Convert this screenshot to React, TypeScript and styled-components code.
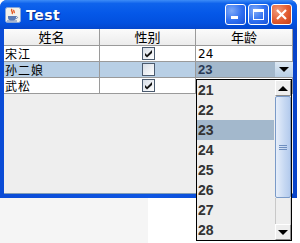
import styled, { createGlobalStyle } from "styled-components"

const GlobalStyle = createGlobalStyle`
    html, body {
        margin: 0;
        padding: 0;
        background: #ffffff;
    }
    * {
        box-sizing: border-box;
    }
`

interface Person {
    name: string
    male: boolean
    age: number
}

const people: Person[] = [
    { name: '宋江', male: true, age: 24 },
    { name: '孙二娘', male: false, age: 23 },
    { name: '武松', male: true, age: 0 },
]

const ages = [21, 22, 23, 24, 25, 26, 27, 28]

function JavaIcon() {
    return (
        <svg width="16" height="16" viewBox="0 0 16 16">
            <rect x="0.5" y="0.5" width="15" height="15" rx="2" fill="#f4f2ea" stroke="#8aa6d6" />
            <path d="M7 2 C5 4 9 5 7 7 M9 3 C8 4 10 5 9 6" stroke="#e2541c" strokeWidth="1.4" fill="none" />
            <path d="M3 9 H11 V11 C11 13 9 13.5 7 13.5 C5 13.5 3 13 3 11 Z" fill="#5a7bb5" />
            <path d="M11 9.5 C13 9.5 13 11.5 11 11.5" stroke="#5a7bb5" strokeWidth="1" fill="none" />
            <path d="M2 14 H12" stroke="#5a7bb5" strokeWidth="1" />
        </svg>
    )
}

function CheckBox({ checked }: { checked: boolean }) {
    return (
        <Box>
            {checked && (
                <svg width="9" height="9" viewBox="0 0 9 9">
                    <path d="M1 4 L3 6 L8 1 L8 4 L3 8.5 L1 6.5 Z" fill="#141414" />
                </svg>
            )}
        </Box>
    )
}

function App() {
    return (
        <Page>
            <GlobalStyle />
            <Window>
                <TitleBar>
                    <JavaIcon />
                    <Title>Test</Title>
                    <Buttons>
                        <CapButton>
                            <MinGlyph />
                        </CapButton>
                        <CapButton>
                            <MaxGlyph />
                        </CapButton>
                        <CapButton $close>
                            <svg width="13" height="13" viewBox="0 0 13 13">
                                <path d="M2 2 L11 11 M11 2 L2 11" stroke="#fff" strokeWidth="2.2" />
                            </svg>
                        </CapButton>
                    </Buttons>
                </TitleBar>
                <Client>
                    <Table>
                        <HeaderRow>
                            <HeadCell>姓名</HeadCell>
                            <HeadCell>性别</HeadCell>
                            <HeadCell>年龄</HeadCell>
                        </HeaderRow>
                        {people.map((p, i) => (
                            <Row key={p.name} $selected={i === 1}>
                                <Cell>{p.name}</Cell>
                                <Cell $center>
                                    <CheckBox checked={p.male} />
                                </Cell>
                                {i === 1 ? (
                                    <ComboCell>
                                        <ComboText>{p.age}</ComboText>
                                        <ComboArrow>
                                            <ArrowDown />
                                        </ComboArrow>
                                    </ComboCell>
                                ) : (
                                    <Cell $number>{p.age ? p.age : ''}</Cell>
                                )}
                            </Row>
                        ))}
                    </Table>
                </Client>
                <Popup>
                    <List>
                        {ages.map((a) => (
                            <Item key={a} $selected={a === 23}>{a}</Item>
                        ))}
                    </List>
                    <ScrollBar>
                        <ScrollButton>
                            <ArrowUp />
                        </ScrollButton>
                        <Thumb>
                            <Grip />
                        </Thumb>
                        <Track />
                        <ScrollButton>
                            <ArrowDown />
                        </ScrollButton>
                    </ScrollBar>
                </Popup>
            </Window>
            <Ground />
        </Page>
    )
}

export default App

const Page = styled.div`
    width: 300px;
    height: 243px;
    overflow: hidden;
    background: #ffffff;
`
const Window = styled.div`
    position: relative;
    width: 297px;
    height: 198px;
    display: flex;
    flex-direction: column;
    border-radius: 7px 7px 0 0;
    background: linear-gradient(90deg, #0a4bd6, #0d55e2 50%, #0843c8);
`
const TitleBar = styled.div`
    height: 29px;
    display: flex;
    align-items: center;
    padding: 0 5px 0 5px;
    border-radius: 7px 7px 0 0;
    background: linear-gradient(#3d8cf7 0%, #0f63ec 12%, #0558e8 45%, #0250df 80%, #0446cc 100%);
`
const Title = styled.div`
    margin-left: 5px;
    color: #ffffff;
    font-family: "DejaVu Sans", sans-serif;
    font-weight: bold;
    font-size: 14px;
    letter-spacing: 0.5px;
    text-shadow: 1px 1px 0 #0a2a8a;
`
const Buttons = styled.div`
    margin-left: auto;
    display: flex;
    gap: 2px;
`
const CapButton = styled.div<{ $close?: boolean }>`
    width: 21px;
    height: 21px;
    border: 1px solid #ffffff;
    border-radius: 3px;
    display: flex;
    align-items: center;
    justify-content: center;
    position: relative;
    background: ${({ $close }) => $close
        ? 'radial-gradient(circle at 30% 30%, #f19a7a, #e25b30 55%, #c4401a)'
        : 'radial-gradient(circle at 30% 30%, #7eaaf8, #2f6ff0 55%, #1a52d8)'};
`
const MinGlyph = styled.div`
    position: absolute;
    left: 5px;
    bottom: 5px;
    width: 7px;
    height: 3px;
    background: #ffffff;
`
const MaxGlyph = styled.div`
    width: 11px;
    height: 11px;
    border: 1px solid #ffffff;
    border-top-width: 3px;
`
const Client = styled.div`
    flex: 1;
    margin: 0 4px 4px 4px;
    background: #eeeeee;
    border-bottom: 1px solid #7f9db9;
`
const Table = styled.div`
    display: flex;
    flex-direction: column;
    font-family: "Noto Sans CJK SC", "DejaVu Sans", sans-serif;
    font-size: 12px;
    line-height: 12px;
    color: #000000;
`
const HeaderRow = styled.div`
    display: grid;
    grid-template-columns: 96px 96px 97px;
    height: 17px;
    background: linear-gradient(#fbfbfb, #ececec);
    border-bottom: 1px solid #9a9a9a;
`
const HeadCell = styled.div`
    display: flex;
    align-items: center;
    justify-content: center;
    border-right: 1px solid #9a9a9a;
    font-size: 13px;
`
const Row = styled.div<{ $selected?: boolean }>`
    display: grid;
    grid-template-columns: 96px 96px 97px;
    height: 16px;
    background: ${({ $selected }) => $selected ? '#b8cfe5' : '#ffffff'};
    border-bottom: 1px solid #9a9a9a;
`
const Cell = styled.div<{ $center?: boolean; $number?: boolean }>`
    display: flex;
    align-items: center;
    justify-content: ${({ $center }) => $center ? 'center' : 'flex-start'};
    padding-left: ${({ $number }) => $number ? '2px' : '1px'};
    border-right: 1px solid #9a9a9a;
    font-family: ${({ $number }) => $number ? '"DejaVu Sans", sans-serif' : 'inherit'};
    font-size: 12px;
    letter-spacing: ${({ $number }) => $number ? '0' : '1px'};
`
const Box = styled.div`
    width: 13px;
    height: 13px;
    border: 1px solid #4a5a6e;
    background: linear-gradient(135deg, #d6dde6, #ffffff);
    display: flex;
    align-items: center;
    justify-content: center;
`
const ComboCell = styled.div`
    display: flex;
    align-items: stretch;
    background: #a3b8cc;
`
const ComboText = styled.div`
    flex: 1;
    padding-left: 2px;
    display: flex;
    align-items: center;
    font-family: "Liberation Sans", sans-serif;
    font-weight: bold;
    font-size: 13px;
    color: #2a3a55;
`
const ComboArrow = styled.div`
    width: 18px;
    display: flex;
    align-items: center;
    justify-content: center;
    background: linear-gradient(#dde8f3, #b8cfe5);
`
const ArrowDown = styled.div`
    width: 0;
    height: 0;
    border-left: 5px solid transparent;
    border-right: 5px solid transparent;
    border-top: 5px solid #000000;
`
const ArrowUp = styled.div`
    width: 0;
    height: 0;
    border-left: 5px solid transparent;
    border-right: 5px solid transparent;
    border-bottom: 5px solid #000000;
`
const Popup = styled.div`
    position: absolute;
    left: 196px;
    top: 79px;
    width: 96px;
    height: 162px;
    border: 1px solid #000000;
    background: #eeeeee;
    display: flex;
    z-index: 2;
`
const List = styled.div`
    flex: 1;
    display: flex;
    flex-direction: column;
`
const Item = styled.div<{ $selected?: boolean }>`
    height: 20px;
    padding-left: 1px;
    display: flex;
    align-items: center;
    font-family: "Liberation Sans", sans-serif;
    font-weight: bold;
    font-size: 14px;
    color: #333333;
    background: ${({ $selected }) => $selected ? '#a3b8cc' : 'transparent'};
`
const ScrollBar = styled.div`
    width: 17px;
    display: flex;
    flex-direction: column;
    border-left: 1px solid #eeeeee;
    background: #eeeeee;
`
const ScrollButton = styled.div`
    height: 16px;
    display: flex;
    align-items: center;
    justify-content: center;
    background: #eeeeee;
    border: 1px solid #ffffff;
    border-right-color: #8c8c8c;
    border-bottom-color: #8c8c8c;
`
const Thumb = styled.div`
    height: 102px;
    display: flex;
    align-items: center;
    justify-content: center;
    border: 1px solid #7a9ac8;
    border-radius: 2px;
    background: linear-gradient(90deg, #e6eefa, #c6d8f2 60%, #b4cbed);
`
const Grip = styled.div`
    width: 8px;
    height: 5px;
    border-top: 1px solid #6f8fbf;
    border-bottom: 1px solid #6f8fbf;
    background: linear-gradient(transparent 1px, #6f8fbf 1px, #6f8fbf 2px, transparent 2px);
`
const Track = styled.div`
    flex: 1;
    background: #eeeeee;
    border-left: 1px solid #c8c8c8;
    border-right: 1px solid #c8c8c8;
`
const Ground = styled.div`
    width: 148px;
    height: 45px;
    background: #f5f5f5;
`
